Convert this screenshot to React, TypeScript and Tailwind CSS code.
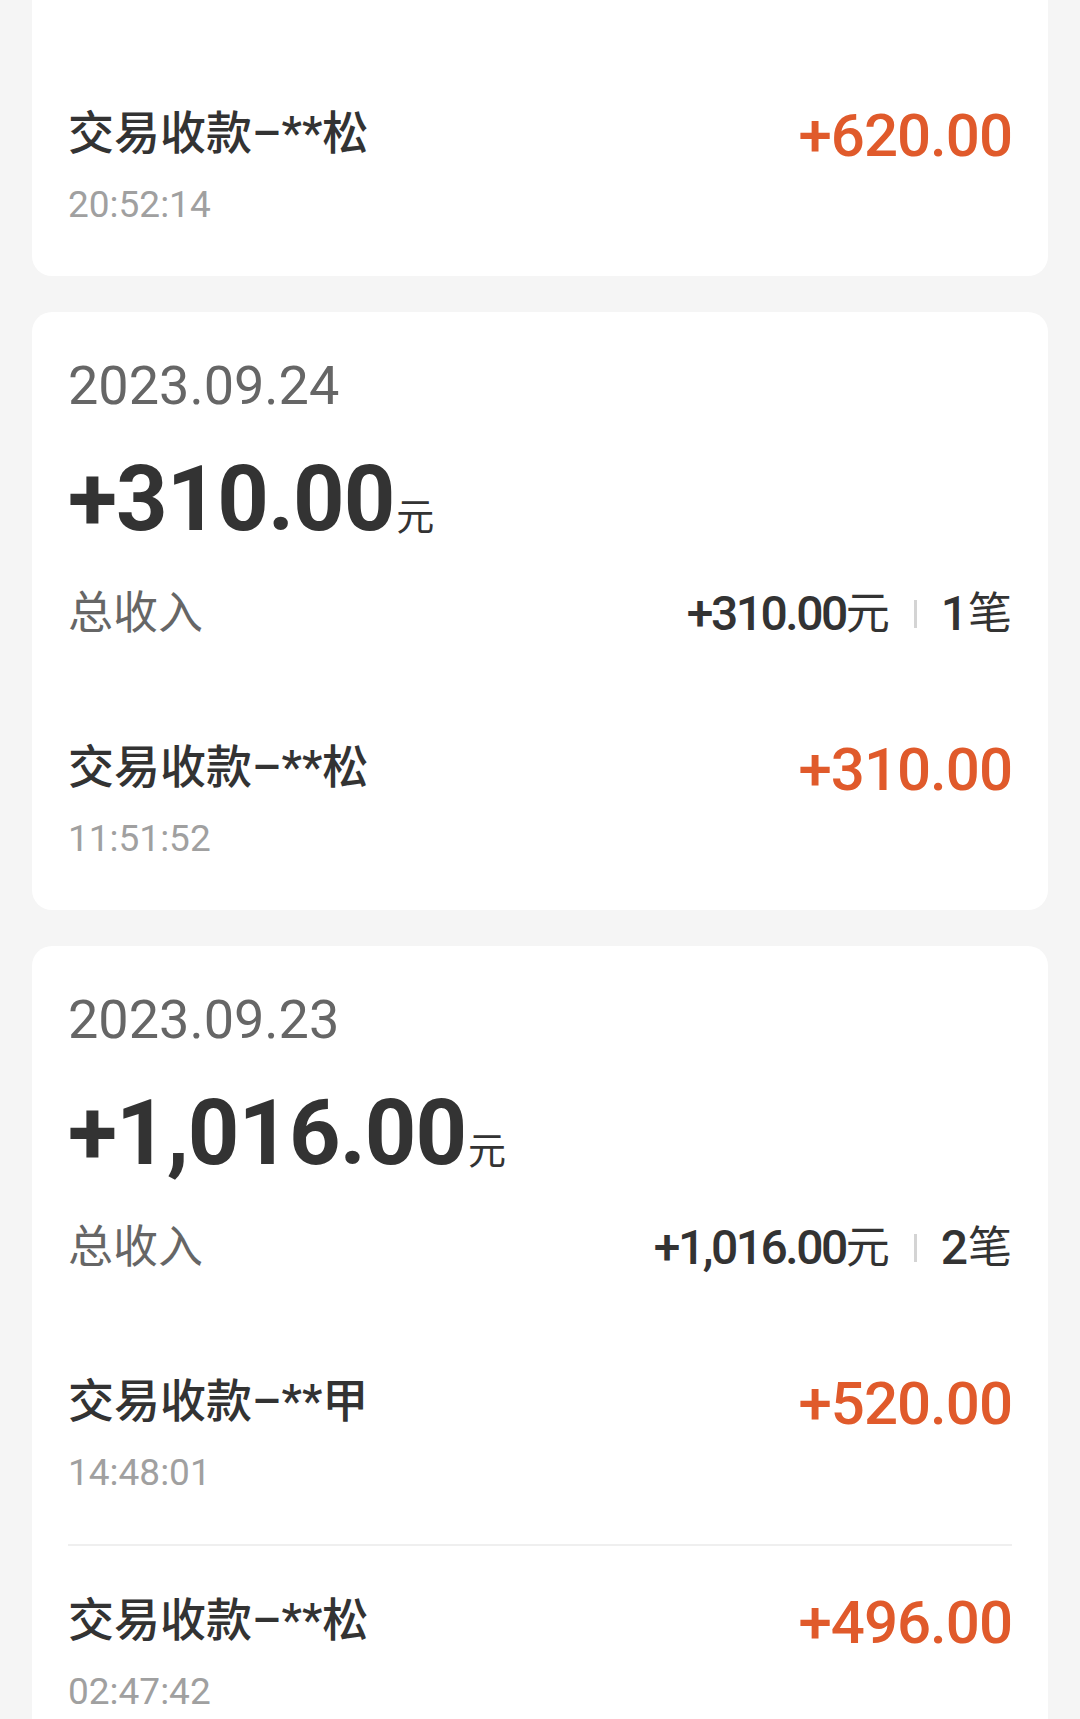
import React from "react";

interface Txn {
  name: string;
  time: string;
  amount: string;
}

interface Day {
  date: string;
  total: string;
  count: number;
  items: Txn[];
}

const days: Day[] = [
  {
    date: "2023.09.25",
    total: "+620.00",
    count: 1,
    items: [{ name: "交易收款–**松", time: "20:52:14", amount: "+620.00" }],
  },
  {
    date: "2023.09.24",
    total: "+310.00",
    count: 1,
    items: [{ name: "交易收款–**松", time: "11:51:52", amount: "+310.00" }],
  },
  {
    date: "2023.09.23",
    total: "+1,016.00",
    count: 2,
    items: [
      { name: "交易收款–**甲", time: "14:48:01", amount: "+520.00" },
      { name: "交易收款–**松", time: "02:47:42", amount: "+496.00" },
    ],
  },
];

const FONT = {
  fontFamily: 'Roboto, "Noto Sans CJK SC", "Noto Sans", sans-serif',
};

function DayCard({ day }: { day: Day }) {
  return (
    <div className="rounded-[20px] bg-white px-[36px] pt-[44px]">
      {/* Header */}
      <div className="text-[54px] leading-[60px] text-[#666]">{day.date}</div>
      <div className="mt-[34px] flex h-[100px] items-baseline leading-[100px] text-[#333]">
        <span className="text-[90px] font-bold tracking-[-1px]">{day.total}</span>
        <span className="ml-[2px] text-[38px]">元</span>
      </div>
      <div className="mt-[34px] flex h-[60px] items-center justify-between">
        <span className="text-[45px] text-[#666]">总收入</span>
        <div className="flex items-center text-[#333]">
          <span className="text-[48px] font-medium tracking-[-2.5px]">{day.total}</span>
          <span className="text-[44px]">元</span>
          <span className="mx-[24px] h-[28px] w-[3px] bg-[#d4d4d4]" />
          <span className="text-[48px] font-medium">{day.count}</span>
          <span className="text-[44px]">笔</span>
        </div>
      </div>

      {/* Transactions */}
      <div className="mt-[49px]">
        {day.items.map((t, i) => (
          <div
            key={t.time}
            className={
              i > 0
                ? "flex justify-between border-t-2 border-[#efefef] pt-[46px] pb-[49px]"
                : "flex justify-between pt-[46px] pb-[49px]"
            }
          >
            <div>
              <div className="text-[46px] font-medium leading-[56px] text-[#333]">{t.name}</div>
              <div className="mt-[22px] text-[37px] leading-[44px] text-[#a0a0a0]">{t.time}</div>
            </div>
            <div className="mt-[3px] text-[60px] font-medium leading-[56px] tracking-[-1px] text-[#e05a2b]">
              {t.amount}
            </div>
          </div>
        ))}
      </div>
    </div>
  );
}

export default function App() {
  return (
    <div className="h-[1719px] overflow-hidden bg-[#f5f5f5] px-[32px]" style={FONT}>
      {/* list is scrolled: first card's header sits above the viewport */}
      <div className="-mt-[322px] flex flex-col gap-[36px]">
        {days.map((d) => (
          <DayCard key={d.date} day={d} />
        ))}
      </div>
    </div>
  );
}
